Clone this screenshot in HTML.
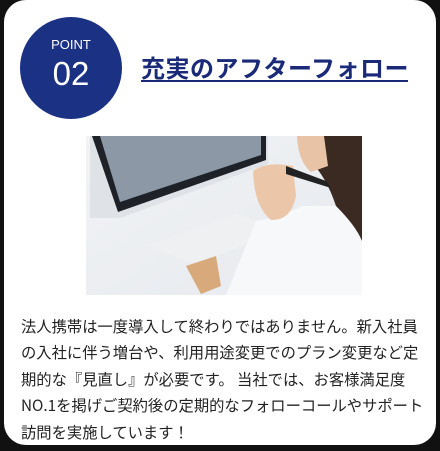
<html><head><style>
body{margin:0;width:440px;height:451px;background:#111;overflow:hidden;font-family:"Liberation Sans","Noto Sans CJK JP",sans-serif}
.card{position:absolute;left:4px;top:0;width:432px;height:445px;background:#fff;border-radius:22px}
.circ{position:absolute;left:20px;top:17px;width:102px;height:102px;border-radius:50%;background:#1b3184;color:#fff;text-align:center}
.p{position:absolute;top:20px;width:100%;font-size:13px}
.n{position:absolute;top:38px;width:100%;font-size:33px}
.t{position:absolute;left:141px;top:52px;font-size:24px;font-weight:bold;color:#1b2a78;font-family:"Noto Sans CJK JP",sans-serif;letter-spacing:0.5px;line-height:30px}
.u{position:absolute;left:141px;top:80px;width:267px;height:1.5px;background:#1b2a78}
.img{position:absolute;left:86px;top:136px}
.txt{position:absolute;left:21px;top:313px;width:410px;font-size:15.3px;line-height:26.4px;color:#222;font-family:"Noto Sans CJK JP",sans-serif}
</style></head><body>
<div class="card"></div>
<div class="circ"><div class="p">POINT</div><div class="n">02</div></div>
<div class="t">充実のアフターフォロー</div>
<div class="u"></div>
<svg class="img" width="276" height="159" viewBox="0 0 276 159">
<defs><linearGradient id="bg" x1="0" y1="0" x2="1" y2="1"><stop offset="0" stop-color="#f1f3f5"/><stop offset="1" stop-color="#e6e9ee"/></linearGradient></defs>
<rect width="276" height="159" fill="url(#bg)"/>
<polygon points="4,0 182,0 182,28 34,82 4,82" fill="#dfe2e6"/>
<polygon points="6,0 180,0 180,24 32,76" fill="#1e2228"/>
<polygon points="14,0 175,0 175,19 34,66" fill="#8d98a6"/>
<polygon points="60,110 150,78 200,92 110,128" fill="#eef0f2"/>
<polygon points="100,130 130,120 135,150 115,158" fill="#d7a97b"/>
<path d="M224,0 L276,0 L276,105 Q255,95 250,70 Q240,40 224,25Z" fill="#3a2a22"/>
<path d="M211,0 L238,0 L242,30 L225,36 Q212,25 211,0Z" fill="#e9c3a6"/>
<path d="M140,159 L170,85 Q200,80 215,70 L250,70 Q270,90 276,105 L276,159Z" fill="#f7f8fa"/>
<path d="M167,35 Q180,25 207,30 L210,60 Q205,85 185,84 Q168,70 167,35Z" fill="#ecc6a8"/>
<path d="M200,30 L240,45 L245,52 L200,38Z" fill="#222"/>
</svg>
<div class="txt">法人携帯は一度導入して終わりではありません。新入社員の入社に伴う増台や、利用用途変更でのプラン変更など定期的な『見直し』が必要です。 当社では、お客様満足度NO.1を掲げご契約後の定期的なフォローコールやサポート訪問を実施しています！</div>
</body></html>
